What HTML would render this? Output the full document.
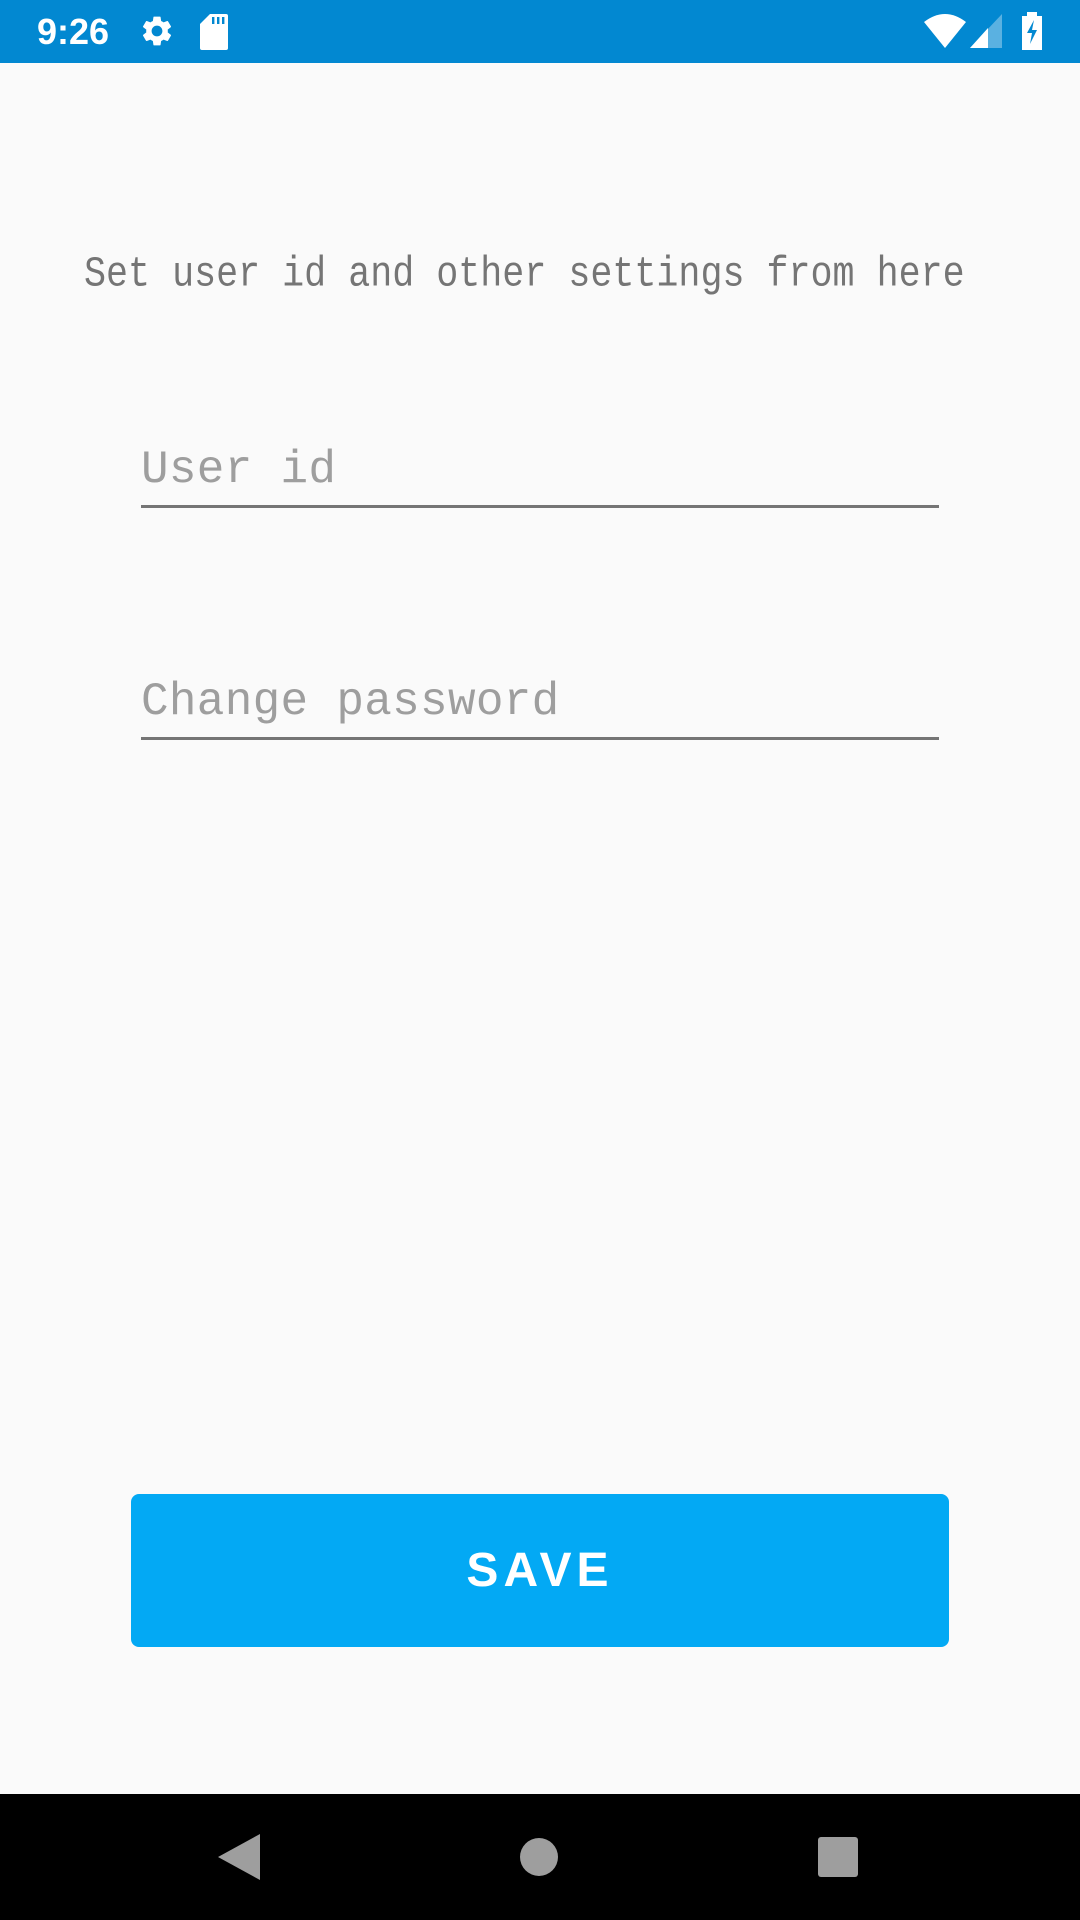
<!DOCTYPE html>
<html><head><meta charset="utf-8"><style>
html,body{margin:0;padding:0;}
body{width:1080px;height:1920px;background:#FAFAFA;position:relative;overflow:hidden;font-family:"Liberation Sans",sans-serif;}
.sb{position:absolute;left:0;top:0;width:1080px;height:63px;background:#0288D1;}
.abs{position:absolute;}
.mono{font-family:"Liberation Mono",monospace;white-space:nowrap;}
</style></head><body>
<div class="sb">
  <div class="abs" style="left:37px;top:10px;color:#fff;font-size:36px;line-height:44px;font-weight:bold;">9:26</div>
  <svg class="abs" style="left:139px;top:13px" width="36" height="36" viewBox="0 0 24 24"><path fill="#fff" d="M19.14 12.94c.04-.3.06-.61.06-.94 0-.32-.02-.64-.07-.94l2.030-1.58a.49.49 0 0 0 .12-.61l-1.92-3.32a.49.49 0 0 0-.59-.22l-2.39.96c-.5-.38-1.030-.7-1.62-.94l-.36-2.54a.48.48 0 0 0-.48-.41h-3.84c-.24 0-.43.17-.47.41l-.36 2.54c-.59.24-1.13.57-1.62.94l-2.39-.96c-.22-.08-.47 0-.59.22L2.74 8.87c-.12.21-.08.47.12.61l2.030 1.58c-.05.3-.09.63-.09.94s.02.64.07.94l-2.030 1.58a.49.49 0 0 0-.12.61l1.92 3.32c.12.22.37.29.59.22l2.39-.96c.5.38 1.030.7 1.62.94l.36 2.54c.05.24.24.41.48.41h3.84c.24 0 .44-.17.47-.41l.36-2.54c.59-.24 1.13-.56 1.62-.94l2.39.96c.22.08.47 0 .59-.22l1.92-3.32c.12-.22.07-.47-.12-.61l-2.010-1.58zM12 15.6c-1.98 0-3.6-1.62-3.6-3.6s1.62-3.6 3.6-3.6 3.6 1.62 3.6 3.6-1.62 3.6-3.6 3.6z"/></svg>
  <svg class="abs" style="left:200px;top:14px" width="28" height="36" viewBox="0 0 14 18"><path fill="#fff" d="M5 0h8a1 1 0 0 1 1 1v16a1 1 0 0 1-1 1H1a1 1 0 0 1-1-1V5z"/><rect x="6" y="1.5" width="1.2" height="3.5" fill="#0288D1"/><rect x="8.5" y="1.5" width="1.2" height="3.5" fill="#0288D1"/><rect x="11" y="1.5" width="1.2" height="3.5" fill="#0288D1"/></svg>
  <svg class="abs" style="left:924px;top:14px" width="42" height="34" viewBox="0 0 42 34"><path fill="#fff" d="M0 8 Q21 -8 42 8 L21 34 Z"/></svg>
  <svg class="abs" style="left:970px;top:14px" width="32" height="34" viewBox="0 0 32 34"><path fill="#fff" opacity="0.35" d="M32 0 V34 H0 Z"/><path fill="#fff" d="M18 14 V34 H0 L18 14Z"/></svg>
  <svg class="abs" style="left:1021px;top:12px" width="22" height="38" viewBox="0 0 22 38"><path fill="#fff" d="M6 0h10v4h5v34H1V4h5z"/><path fill="#0288D1" d="M13 8 L6 21 h5 l-2 11 l7-14 h-5z"/></svg>
</div>

<div class="abs mono" style="left:84px;top:250px;font-size:36.7px;line-height:50px;color:#757575;transform:scaleY(1.15);transform-origin:0 50%;">Set user id and other settings from here</div>

<div class="abs mono" style="left:141px;top:442px;font-size:46px;line-height:56px;letter-spacing:0.3px;color:#9E9E9E;">User id</div>
<div class="abs" style="left:141px;top:505px;width:798px;height:3px;background:#757575;"></div>

<div class="abs mono" style="left:141px;top:674px;font-size:46px;line-height:56px;letter-spacing:0.3px;color:#9E9E9E;">Change password</div>
<div class="abs" style="left:141px;top:737px;width:798px;height:3px;background:#757575;"></div>

<div class="abs" style="left:131px;top:1494px;width:818px;height:153px;background:#03A9F4;border-radius:8px;color:#fff;font-size:48px;font-weight:bold;letter-spacing:5px;text-align:center;line-height:153px;">SAVE</div>

<div class="abs" style="left:0;top:1794px;width:1080px;height:126px;background:#000;">
  <svg class="abs" style="left:218px;top:40px" width="42" height="46" viewBox="0 0 42 46"><path fill="#9E9E9E" d="M42 0 V46 L0 23 Z"/></svg>
  <div class="abs" style="left:520px;top:44px;width:38px;height:38px;border-radius:50%;background:#9E9E9E;"></div>
  <div class="abs" style="left:818px;top:43px;width:40px;height:40px;border-radius:3px;background:#9E9E9E;"></div>
</div>
</body></html>
